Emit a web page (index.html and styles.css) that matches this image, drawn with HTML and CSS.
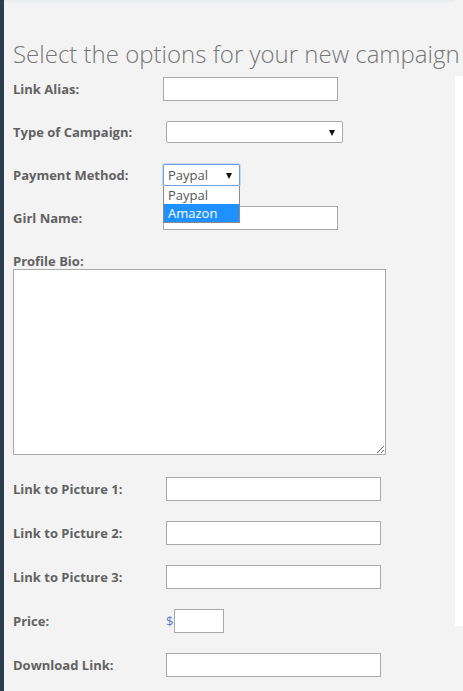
FILE: index.html
```html
<!DOCTYPE html>
<html>
<head>
<meta charset="utf-8">
<link rel="stylesheet" href="styles.css">
</head>
<body>
<div class="side"></div>
<main class="main">
  <h1 class="title">Select the options for your new campaign</h1>
  <form class="form">
    <div class="row">
      <label class="lbl">Link Alias:</label>
      <input class="field field-md" type="text">
    </div>
    <div class="row">
      <label class="lbl">Type of Campaign:</label>
      <span class="select-wrap shift">
        <select class="select select-lg"><option></option></select>
        <span class="arrow"></span>
      </span>
    </div>
    <div class="row">
      <label class="lbl">Payment Method:</label>
      <span class="select-wrap">
        <select class="select select-sm is-focus"><option>Paypal</option><option>Amazon</option></select>
        <span class="arrow"></span>
        <ul class="dropdown">
          <li class="opt">Paypal</li>
          <li class="opt opt-active">Amazon</li>
        </ul>
      </span>
    </div>
    <div class="row row-last">
      <label class="lbl">Girl Name:</label>
      <input class="field field-md" type="text">
    </div>
    <div class="bio">
      <label class="lbl lbl-block">Profile Bio:</label>
      <textarea class="textarea"></textarea>
    </div>
    <div class="group2">
      <div class="row row-wide">
        <label class="lbl">Link to Picture 1:</label>
        <input class="field field-lg shift" type="text">
      </div>
      <div class="row row-wide">
        <label class="lbl">Link to Picture 2:</label>
        <input class="field field-lg shift" type="text">
      </div>
      <div class="row row-wide">
        <label class="lbl">Link to Picture 3:</label>
        <input class="field field-lg shift" type="text">
      </div>
      <div class="row row-wide">
        <label class="lbl">Price:</label>
        <span class="price shift"><span class="dollar">$</span><input class="field field-xs" type="text"></span>
      </div>
      <div class="row row-wide">
        <label class="lbl">Download Link:</label>
        <input class="field field-lg shift" type="text">
      </div>
    </div>
  </form>
</main>
<div class="rail"></div>
</body>
</html>
```

FILE: styles.css
```css
html, body {
  margin: 0;
  padding: 0;
}

body {
  display: flex;
  height: 691px;
  overflow: hidden;
  background: #f3f3f3;
  font-family: "Open Sans", "DejaVu Sans", sans-serif;
}

.side {
  flex: none;
  width: 4px;
  background: #2b3d4f;
}

.main {
  flex: 1;
  min-width: 0;
  padding-left: 9px;
  border-top: 2px solid #eaedf0;
}

.rail {
  flex: none;
  width: 8px;
  height: 550px;
  margin-top: 76px;
  background: #ffffff;
}

.title {
  margin: 36px 0 7px 0;
  font-size: 24px;
  line-height: 32px;
  font-weight: 300;
  color: #777777;
  white-space: nowrap;
}

.form {
  margin: 0;
}

.row {
  display: flex;
  align-items: center;
  height: 24px;
  margin-bottom: 19px;
}

.row-last {
  margin-top: 1px;
  margin-bottom: 0;
}

.row-wide {
  margin-bottom: 20px;
}

.lbl {
  flex: none;
  width: 150px;
  font-size: 13px;
  line-height: 16px;
  font-weight: 700;
  color: #626262;
}

.lbl-block {
  display: block;
  width: auto;
}

.field {
  box-sizing: border-box;
  height: 24px;
  margin: 0;
  padding: 0 4px;
  border: 1px solid #a9a9a9;
  background: #ffffff;
  font-family: inherit;
  font-size: 13px;
  outline: none;
}

.field-md { width: 175px; }
.field-lg { width: 215px; }
.field-xs { width: 50px; }

.select-wrap {
  position: relative;
  display: inline-flex;
  align-items: center;
}

.select {
  -webkit-appearance: none;
  appearance: none;
  box-sizing: border-box;
  height: 22px;
  margin: 0;
  padding: 0 4px;
  border: 1px solid #a9a9a9;
  border-radius: 2px;
  background: #ffffff;
  font-family: inherit;
  font-size: 13px;
  color: #555555;
  outline: none;
}

.select-lg { width: 177px; }
.select-sm { width: 77px; }

.shift {
  margin-left: 3px;
}

.is-focus {
  border-color: #6f9ee0;
  box-shadow: 0 0 0 1px rgba(125, 170, 235, 0.35);
}

.arrow {
  position: absolute;
  right: 8px;
  top: 9px;
  width: 0;
  height: 0;
  border-left: 3px solid transparent;
  border-right: 3px solid transparent;
  border-top: 6px solid #111111;
  pointer-events: none;
}

.dropdown {
  position: absolute;
  left: 0;
  top: 22px;
  z-index: 5;
  box-sizing: border-box;
  width: 77px;
  margin: 0;
  padding: 0;
  list-style: none;
  background: #ffffff;
  border: 1px solid #8a8a8a;
  border-top: none;
}

.opt {
  height: 18px;
  padding-left: 4px;
  font-size: 13px;
  line-height: 18px;
  color: #555555;
}

.opt-active {
  background: #1e90ff;
  color: #ffffff;
}

.bio {
  margin-top: 23px;
}

.textarea {
  display: block;
  box-sizing: border-box;
  width: 373px;
  height: 186px;
  margin: 0;
  padding: 2px;
  border: 1px solid #a9a9a9;
  background: #ffffff;
  font-family: inherit;
  font-size: 13px;
  outline: none;
}

.group2 {
  margin-top: 22px;
}

.price {
  display: inline-flex;
  align-items: center;
}

.dollar {
  font-size: 13px;
  color: #5b7cc0;
  width: 8px;
}
```
